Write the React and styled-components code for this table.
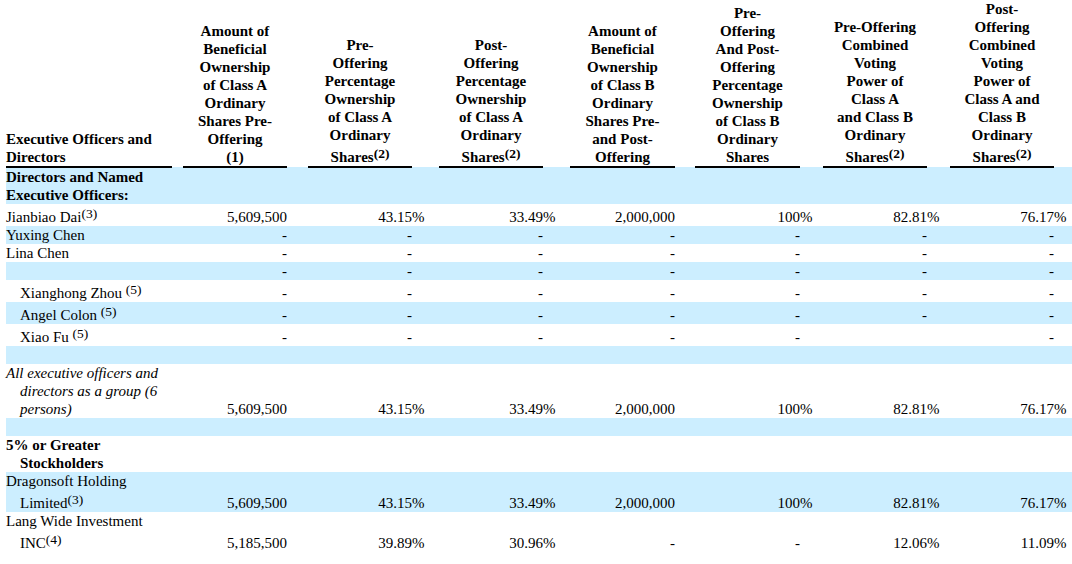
import React from "react";
import styled, { createGlobalStyle } from "styled-components";

const GlobalStyle = createGlobalStyle`
  body {
    margin: 0;
    background: #ffffff;
    color: #000000;
    font-family: "Liberation Serif", "Times New Roman", serif;
  }
`;

const Table = styled.table`
  table-layout: fixed;
  width: 1066px;
  margin-left: 6px;
  border-collapse: collapse;
  border-spacing: 0;
  font-size: 15px;
  line-height: 18px;
`;

const Row = styled.tr`
  background: ${p => (p.$shade ? "#cceeff" : "transparent")};
`;

const HeadCell = styled.th`
  padding: 0;
  vertical-align: bottom;
  text-align: ${p => (p.$left ? "left" : "center")};
  font-weight: 700;
  white-space: nowrap;
  border-bottom: ${p => (p.$rule ? "2px solid #000" : "none")};
`;

const NameCell = styled.td`
  padding: 0 0 0 ${p => p.$indent || 0}px;
  text-indent: ${p => (p.$hang ? -14 : 0)}px;
  vertical-align: bottom;
  font-weight: ${p => (p.$bold ? 700 : 400)};
  font-style: ${p => (p.$italic ? "italic" : "normal")};
`;

const ValueCell = styled.td`
  padding: 0;
  vertical-align: bottom;
  text-align: right;
  white-space: nowrap;
`;

const SuffixCell = styled.td`
  padding: 0;
  vertical-align: bottom;
  text-align: left;
  white-space: nowrap;
`;

const Sup = styled.sup`
  font-size: 13.5px;
  line-height: 19px;
  vertical-align: 4px;
`;

// column geometry: gap before, value width, % suffix width
const columns = [
  { pad: 11, w: 104, head: ["Amount of", "Beneficial", "Ownership", "of Class A", "Ordinary", "Shares Pre-", "Offering", "(1)"] },
  { pad: 9, w: 104, head: ["Pre-", "Offering", "Percentage", "Ownership", "of Class A", "Ordinary", "Shares"], note: "(2)" },
  { pad: 15, w: 104, head: ["Post-", "Offering", "Percentage", "Ownership", "of Class A", "Ordinary", "Shares"], note: "(2)" },
  { pad: 15, w: 105, head: ["Amount of", "Beneficial", "Ownership", "of Class B", "Ordinary", "Shares Pre-", "and Post-", "Offering"] },
  { pad: 8, w: 105, head: ["Pre-", "Offering", "And Post-", "Offering", "Percentage", "Ownership", "of Class B", "Ordinary", "Shares"] },
  { pad: 11, w: 104, head: ["Pre-Offering", "Combined", "Voting", "Power of", "Class A", "and Class B", "Ordinary", "Shares"], note: "(2)" },
  { pad: 11, w: 104, head: ["Post-", "Offering", "Combined", "Voting", "Power of", "Class A and", "Class B", "Ordinary", "Shares"], note: "(2)" },
];

const SUFFIX = 12;
const DASHES = ["-", "-", "-", "-", "-", "-", "-"];
const MAIN = ["5,609,500", "43.15%", "33.49%", "2,000,000", "100%", "82.81%", "76.17%"];

const rows = [
  { shade: true, bold: true, name: <>Directors and Named<br />Executive Officers:</>, values: [] },
  { name: <>Jianbiao Dai<Sup>(3)</Sup></>, values: MAIN },
  { shade: true, name: "Yuxing Chen", values: DASHES },
  { name: "Lina Chen", values: DASHES },
  { shade: true, name: "", values: DASHES },
  { indent: 14, name: <>Xianghong Zhou <Sup>(5)</Sup></>, values: DASHES },
  { shade: true, indent: 14, name: <>Angel Colon <Sup>(5)</Sup></>, values: DASHES },
  { indent: 14, name: <>Xiao Fu <Sup>(5)</Sup></>, values: ["-", "-", "-", "-", "-", "", "-"] },
  { shade: true, name: "", values: [] },
  { hang: true, italic: true, name: "All executive officers and directors as a group (6 persons)", values: MAIN },
  { shade: true, name: "", values: [] },
  { hang: true, bold: true, name: "5% or Greater Stockholders", values: [] },
  { shade: true, hang: true, name: <>Dragonsoft Holding Limited<Sup>(3)</Sup></>, values: MAIN },
  { hang: true, name: <>Lang Wide Investment INC<Sup>(4)</Sup></>, values: ["5,185,500", "39.89%", "30.96%", "-", "-", "12.06%", "11.09%"] },
];

const splitValue = v => (v.endsWith("%") ? [v.slice(0, -1), "%"] : [v, ""]);

const App = () => (
  <>
    <GlobalStyle />
    <Table>
      <colgroup>
        <col style={{ width: 166 }} />
        {columns.map((c, i) => (
          <React.Fragment key={i}>
            <col style={{ width: c.pad }} />
            <col style={{ width: c.w }} />
            <col style={{ width: SUFFIX }} />
          </React.Fragment>
        ))}
        <col style={{ width: 6 }} />
      </colgroup>
      <thead>
        <Row>
          <HeadCell $left $rule>
            Executive Officers and
            <br />
            Directors
          </HeadCell>
          {columns.map((c, i) => (
            <React.Fragment key={i}>
              <HeadCell />
              <HeadCell $rule>
                {c.head.map((line, j) => (
                  <React.Fragment key={j}>
                    {j > 0 && <br />}
                    {line}
                  </React.Fragment>
                ))}
                {c.note && <Sup>{c.note}</Sup>}
              </HeadCell>
              <HeadCell />
            </React.Fragment>
          ))}
          <HeadCell />
        </Row>
      </thead>
      <tbody>
        {rows.map((r, i) => (
          <Row key={i} $shade={r.shade}>
            <NameCell $indent={r.hang ? 14 : r.indent} $hang={r.hang} $bold={r.bold} $italic={r.italic}>
              {r.name || "\u00a0"}
            </NameCell>
            {columns.map((c, j) => {
              const [num, suffix] = splitValue(r.values[j] || "");
              return (
                <React.Fragment key={j}>
                  <ValueCell />
                  <ValueCell>{num}</ValueCell>
                  <SuffixCell>{suffix}</SuffixCell>
                </React.Fragment>
              );
            })}
            <ValueCell />
          </Row>
        ))}
      </tbody>
    </Table>
  </>
);

export default App;
